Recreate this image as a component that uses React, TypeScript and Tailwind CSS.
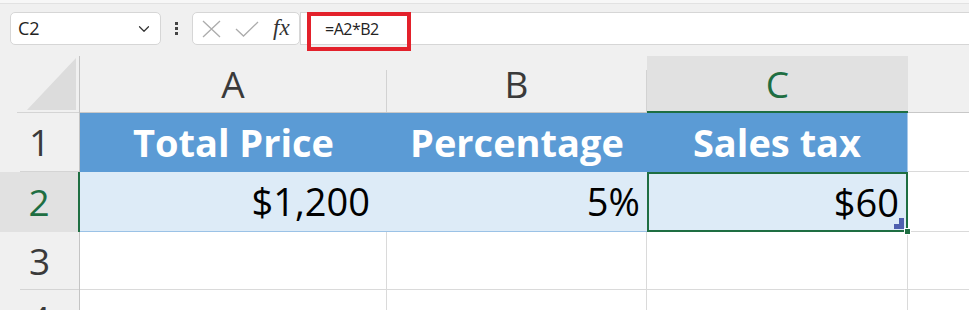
import { ChevronDown } from 'lucide-react';

const font = "font-['Open_Sans',sans-serif]";

function RowHead({ n, active = false, h }: { n: number; active?: boolean; h: string }) {
  if (active) {
    return (
      <div className={`w-[80px] ${h} shrink-0 flex items-center justify-center bg-[#e1e1e1] border-r-2 border-[#1e6e42] text-[37px] text-[#1e6e42]`}>
        {n}
      </div>
    );
  }
  return (
    <div className={`w-[80px] ${h} shrink-0 flex flex-col bg-[#f0f0f0] border-r border-[#c4c4c4]`}>
      <div className="flex-1 flex items-center justify-center text-[37px] text-[#3a3a3a]">{n}</div>
      <div className="ml-[20px] h-px bg-[#d4d4d4]" />
    </div>
  );
}

function ColHead({ label, w, active = false }: { label: string; w: string; active?: boolean }) {
  if (active) {
    return (
      <div className={`${w} shrink-0 h-[57px] flex items-center justify-center bg-[#e1e1e1] border-b-2 border-[#1e6e42] text-[37px] text-[#1e6e42]`}>
        {label}
      </div>
    );
  }
  return (
    <div className={`${w} shrink-0 h-[57px] flex border-b border-[#c8c8c8]`}>
      <div className="flex-1 flex items-center justify-center text-[37px] text-[#3a3a3a]">{label}</div>
      <div className="w-px mt-[14px] bg-[#d2d2d2]" />
    </div>
  );
}

export default function App() {
  return (
    <div className={`w-[969px] h-[310px] overflow-hidden bg-[#f0f0f0] ${font}`}>
      {/* top strip */}
      <div className="h-[4px] bg-[#f7f7f7] border-b border-[#e2e2e2]" />

      {/* formula bar */}
      <div className="flex pt-[8px] h-[41px]">
        <div className="ml-[10px] w-[151px] h-[33px] flex items-center justify-between bg-white border border-[#d6d6d6] rounded-[5px] pl-[7px] pr-[7px]">
          <span className="text-[18px] text-[#222]">C2</span>
          <ChevronDown size={18} strokeWidth={1.6} className="text-[#333]" />
        </div>
        <div className="w-[31px] h-[33px] flex flex-col items-center justify-center gap-[2px]">
          <div className="w-[3px] h-[3px] bg-[#444]" />
          <div className="w-[3px] h-[3px] bg-[#444]" />
          <div className="w-[3px] h-[3px] bg-[#444]" />
        </div>
        <div className="w-[108px] h-[33px] flex items-center bg-white border border-[#d6d6d6] rounded-[5px] pl-[9px]">
          <svg width="19" height="18" viewBox="0 0 19 18" className="mr-[14px]">
            <path d="M1 1L18 17M18 1L1 17" stroke="#acacac" strokeWidth="1.3" fill="none" />
          </svg>
          <svg width="24" height="16" viewBox="0 0 24 16" className="mr-[14px]">
            <path d="M1 8L8.5 15L23 1" stroke="#acacac" strokeWidth="1.3" fill="none" />
          </svg>
          <span className="font-['Liberation_Serif',serif] italic text-[23px] leading-none text-[#333] pb-[3px]">fx</span>
        </div>
        <div className="relative flex-1 h-[33px] flex items-center bg-white border-y border-l border-[#d6d6d6] pl-[24px]">
          <span className="text-[16px] tracking-[-0.5px] text-[#222]">=A2*B2</span>
          <div className="absolute left-[6px] top-[-1px] w-[104px] h-[39px] border-[4px] border-[#e3212b]" />
        </div>
      </div>

      <div className="h-[11px]" />

      {/* column headers */}
      <div className="flex">
        <div className="w-[80px] h-[57px] shrink-0 flex flex-col border-r border-[#c4c4c4]">
          <div className="flex-1 flex justify-end pr-[3px] pt-[2px]">
            <svg width="49" height="52" viewBox="0 0 49 52">
              <path d="M49 0L0 52H49Z" fill="#dcdcdc" />
            </svg>
          </div>
          <div className="ml-[17px] h-px bg-[#d4d4d4]" />
        </div>
        <ColHead label="A" w="w-[307px]" />
        <ColHead label="B" w="w-[260px]" />
        <ColHead label="C" w="w-[261px]" active />
        <div className="flex-1 h-[57px] border-b border-[#c8c8c8]" />
      </div>

      {/* row 1 */}
      <div className="flex">
        <RowHead n={1} h="h-[59px]" />
        <div className="w-[828px] h-[59px] flex bg-[#5b9bd5] border-r border-[#a9c9ea] text-white font-bold text-[38px]">
          <div className="w-[307px] flex items-center justify-center">Total Price</div>
          <div className="w-[260px] flex items-center justify-center">Percentage</div>
          <div className="flex-1 flex items-center justify-center">Sales tax</div>
        </div>
        <div className="flex-1 h-[59px] bg-white border-b border-[#dadada]" />
      </div>

      {/* row 2 */}
      <div className="flex">
        <RowHead n={2} h="h-[60px]" active />
        <div className="w-[307px] h-[60px] flex items-center justify-end pr-[17px] bg-[#ddebf7] border-b border-[#9bc2e6] text-[38px] text-black">
          $1,200
        </div>
        <div className="w-[260px] h-[60px] flex items-center justify-end pr-[7px] bg-[#ddebf7] border-b border-[#9bc2e6] text-[38px] text-black">
          5%
        </div>
        <div className="relative w-[261px] h-[60px] flex items-center justify-end pr-[7px] bg-[#ddebf7] border-2 border-[#1e6e42] text-[38px] text-black">
          $60
          <svg width="10" height="11" viewBox="0 0 10 11" className="absolute right-[2px] bottom-[1px]">
            <path d="M5 0H10V11H0V6H5Z" fill="#4f5fae" />
          </svg>
          <div className="absolute right-[-5px] bottom-[-5px] w-[7px] h-[7px] bg-[#1e6e42] border border-white" />
        </div>
        <div className="flex-1 h-[60px] bg-white border-b border-[#dadada]" />
      </div>

      {/* row 3 */}
      <div className="flex">
        <RowHead n={3} h="h-[58px]" />
        <div className="w-[307px] h-[58px] bg-white border-r border-b border-[#dadada]" />
        <div className="w-[260px] h-[58px] bg-white border-r border-b border-[#dadada]" />
        <div className="w-[261px] h-[58px] bg-white border-r border-b border-[#dadada]" />
        <div className="flex-1 h-[58px] bg-white border-b border-[#dadada]" />
      </div>

      {/* row 4 */}
      <div className="flex">
        <RowHead n={4} h="h-[58px]" />
        <div className="w-[307px] h-[58px] bg-white border-r border-b border-[#dadada]" />
        <div className="w-[260px] h-[58px] bg-white border-r border-b border-[#dadada]" />
        <div className="w-[261px] h-[58px] bg-white border-r border-b border-[#dadada]" />
        <div className="flex-1 h-[58px] bg-white border-b border-[#dadada]" />
      </div>
    </div>
  );
}
